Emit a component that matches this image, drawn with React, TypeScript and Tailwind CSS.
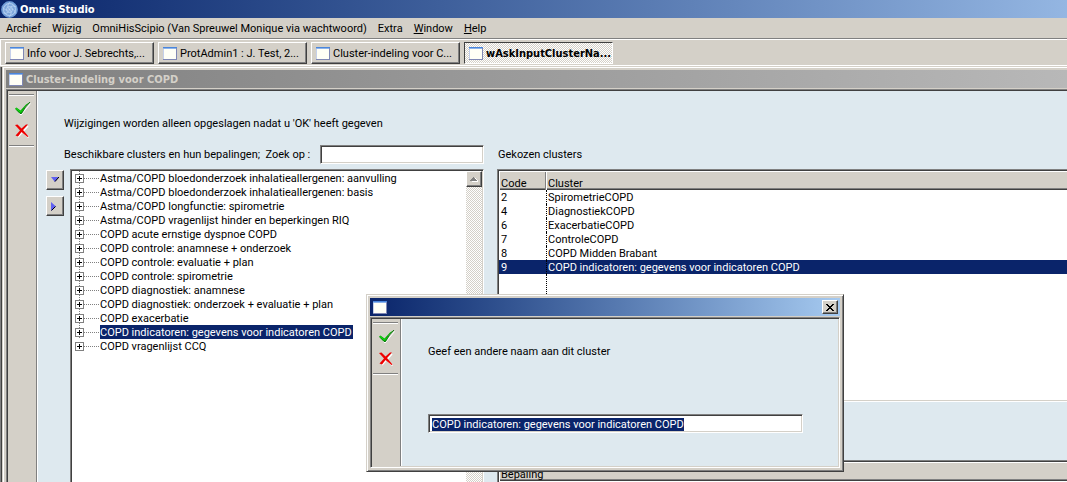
import { useEffect, useRef } from 'react';

const clusters = [
  'Astma/COPD bloedonderzoek inhalatieallergenen: aanvulling',
  'Astma/COPD bloedonderzoek inhalatieallergenen: basis',
  'Astma/COPD longfunctie: spirometrie',
  'Astma/COPD vragenlijst hinder en beperkingen RIQ',
  'COPD acute ernstige dyspnoe COPD',
  'COPD controle: anamnese + onderzoek',
  'COPD controle: evaluatie + plan',
  'COPD controle: spirometrie',
  'COPD diagnostiek: anamnese',
  'COPD diagnostiek: onderzoek + evaluatie + plan',
  'COPD exacerbatie',
  'COPD indicatoren: gegevens voor indicatoren COPD',
  'COPD vragenlijst CCQ',
];
const selectedCluster = 11;

const chosen = [
  { code: 2, name: 'SpirometrieCOPD' },
  { code: 4, name: 'DiagnostiekCOPD' },
  { code: 6, name: 'ExacerbatieCOPD' },
  { code: 7, name: 'ControleCOPD' },
  { code: 8, name: 'COPD Midden Brabant' },
  { code: 9, name: 'COPD indicatoren: gegevens voor indicatoren COPD' },
];

const tabs = ['Info voor J. Sebrechts,...', 'ProtAdmin1 : J. Test, 2...', 'Cluster-indeling voor C...', 'wAskInputClusterNa...'];

const raised =
  'border border-t-white border-l-white border-r-[#404040] border-b-[#404040] shadow-[inset_-1px_-1px_0_#808080] bg-[#d4d0c8]';
const sunken =
  'border border-t-[#808080] border-l-[#808080] border-r-white border-b-white shadow-[inset_1px_1px_0_#404040,inset_-1px_-1px_0_#d4d0c8] bg-white';
const checker = 'bg-[repeating-conic-gradient(#d4d0c8_0_25%,#ffffff_0_50%)] bg-[length:2px_2px]';
const boldFont = "font-['DejaVu_Sans_Condensed','DejaVu_Sans',sans-serif] font-bold";

function Logo() {
  return (
    <svg width="17" height="17" viewBox="0 0 17 17" className="shrink-0" aria-hidden="true">
      <circle cx="8.5" cy="8.5" r="8.2" fill="#7ea6dc" />
      <g fill="none" stroke="#c3daf5" strokeWidth="0.7">
        <path d="M8.5 8.5C9 5 12 4 15.5 6M8.5 8.5C11.500 7 14 9 14.500 13M8.500 8.500C11 10.500 10.500 13.500 8 16M8.500 8.500C8 11.500 5.500 13 2 12M8.500 8.500C5.500 10 3 8.500 1 5.500M8.500 8.500C6 6.500 6.500 3.500 9 1" />
        <circle cx="8.5" cy="8.5" r="3" />
        <circle cx="8.5" cy="8.5" r="6" />
      </g>
      <circle cx="8.5" cy="8.5" r="7.8" fill="none" stroke="#5b8acb" strokeWidth="0.8" />
    </svg>
  );
}

function WindowIcon() {
  return (
    <svg width="14" height="13" viewBox="0 0 14 13" shapeRendering="crispEdges" className="shrink-0" aria-hidden="true">
      <rect width="14" height="13" fill="#c5d0ea" />
      <rect x="1" y="1" width="12" height="11" fill="#fffff6" />
      <rect width="14" height="1" fill="#4a86dc" />
      <rect y="1" width="14" height="1" fill="#8db3ea" />
      <rect x="13" y="1" width="1" height="12" fill="#8088b4" />
      <rect y="12" width="14" height="1" fill="#8088b4" />
    </svg>
  );
}

function CheckIcon() {
  return (
    <svg width="16" height="14" viewBox="0 0 16 14" aria-hidden="true">
      <path d="M1 8 6 13 15.500 1.500" fill="none" stroke="#fff" strokeWidth="1" />
      <path d="M0 6.500 1.500 5.500 5.500 8.500 11 2.500 15 0 10 5 6.500 11.500 5 11.500Z" fill="#00b400" />
      <path d="M15 0 10.500 5 6.500 11.500 5 11.500 1 7.500" fill="none" stroke="#006c00" strokeWidth="0.9" />
      <path d="M1 6.500 5.500 10 7.500 8" fill="none" stroke="#16dc16" strokeWidth="1" />
    </svg>
  );
}

function CrossIcon() {
  return (
    <svg width="15" height="14" viewBox="0 0 15 14" aria-hidden="true">
      <path d="M2 2 13.500 13.500M13 2 3 13" fill="none" stroke="#fff" strokeWidth="1.500" />
      <path d="M0 1 2.500 0.500 6.500 4.500 11 0.500 13 0.500 8 6 13.500 12.500 12.500 13 6.500 8 3 12.500 0.500 11.500 5 6.500Z" fill="#ee0000" />
    </svg>
  );
}

function Groove() {
  return <div className="mx-px h-[2px] w-[25px] border-t border-b border-t-[#808080] border-b-white" />;
}

function SideBar() {
  return (
    <div className="flex w-[30px] shrink-0 flex-col border-r border-r-white bg-[#d4d0c8] pt-[3px] shadow-[inset_-1px_0_0_#808080]">
      <Groove />
      <div className="flex flex-col gap-2 pt-[6px] pb-[7px] pl-[7px]">
        <button type="button" aria-label="OK" className="h-[14px] w-4">
          <CheckIcon />
        </button>
        <button type="button" aria-label="Annuleren" className="h-[14px] w-4">
          <CrossIcon />
        </button>
      </div>
      <Groove />
    </div>
  );
}

function ClusterTree() {
  return (
    <div className={`-mb-1 flex min-h-0 flex-1 overflow-hidden p-px ${sunken}`}>
      <ul className="min-w-0 flex-1 pl-[3px]">
        {clusters.map((name, i) => (
          <li key={name} className="flex h-[14px] items-center">
            <div
              className={`flex h-[14px] w-[9px] items-center ${
                i === clusters.length - 1
                  ? ''
                  : 'bg-[repeating-linear-gradient(#808080_0_1px,#fff_1px_2px)] bg-[length:1px_100%] bg-[position:4px_0] bg-no-repeat'
              }`}
            >
              <button type="button" aria-label={`Uitklappen ${name}`} className="h-[9px] w-[9px]">
                <svg width="9" height="9" shapeRendering="crispEdges" aria-hidden="true">
                  <path d="M0.500 0.500H8.500V8.500H0.500Z" fill="#fff" stroke="#808080" />
                  <path d="M2 4.500H7M4.500 2V7" stroke="#000" />
                </svg>
              </button>
            </div>
            <span className="h-px w-4 bg-[repeating-linear-gradient(90deg,#808080_0_1px,#fff_1px_2px)]" />
            <span
              className={`h-[14px] pt-px pr-px leading-[13px] whitespace-nowrap ${
                i === selectedCluster ? 'bg-[#0a246a] text-white' : ''
              }`}
            >
              {name}
            </span>
          </li>
        ))}
      </ul>
      <div className={`w-4 shrink-0 ${checker}`}>
        <button type="button" aria-label="Omhoog" className={`flex h-4 w-4 items-center justify-center ${raised}`}>
          <svg width="8" height="5" shapeRendering="crispEdges" aria-hidden="true">
            <path d="M1 5H8V4L5 1Z" fill="#fff" />
            <path d="M0 4 3.500 0 7 4Z" fill="#808080" />
          </svg>
        </button>
      </div>
    </div>
  );
}

const headCell =
  'h-[19px] border-t border-l border-t-white border-l-white bg-[#d4d0c8] pl-px pt-[5px] text-left align-middle font-normal leading-[13px] shadow-[inset_-1px_0_0_#808080,inset_0_-1px_0_#404040,inset_0_-2px_0_#808080]';

function ChosenTable() {
  return (
    <div className={`h-[233px] overflow-hidden p-px ${sunken}`}>
      <table className="h-full w-full table-fixed border-separate border-spacing-0">
        <thead>
          <tr>
            <th className={`w-[47px] ${headCell}`}>Code</th>
            <th className={headCell}>Cluster</th>
          </tr>
        </thead>
        <tbody>
          {chosen.map((row) => (
            <tr key={row.code} className={row.code === 9 ? 'bg-[#0a246a] text-white' : ''}>
              <td className="h-[14px] pt-px pl-[2px] leading-[13px]">{row.code}</td>
              <td className="h-[14px] border-l border-dotted border-black pt-px pl-px leading-[13px] whitespace-nowrap">{row.name}</td>
            </tr>
          ))}
          <tr>
            <td />
            <td className="border-l border-dotted border-black" />
          </tr>
        </tbody>
      </table>
    </div>
  );
}

function RenameDialog() {
  const input = useRef<HTMLInputElement>(null);
  useEffect(() => {
    input.current?.focus();
    input.current?.select();
  }, []);
  return (
    <div
      role="dialog"
      aria-label="Naam van cluster"
      className="absolute top-[294px] left-[366px] w-[478px] border border-t-[#d4d0c8] border-l-[#d4d0c8] border-r-[#404040] border-b-[#404040] bg-[#d4d0c8] p-[3px] shadow-[inset_1px_1px_0_#fff,inset_-1px_-1px_0_#808080]"
    >
      <div className="flex h-[18px] items-center justify-between bg-linear-to-r from-[#0a246a] to-[#a6caf0] pr-[2px] pl-[3px]">
        <WindowIcon />
        <button type="button" aria-label="Sluiten" className={`flex h-[14px] w-4 items-center justify-center ${raised}`}>
          <svg width="8" height="7" shapeRendering="crispEdges" aria-hidden="true">
            <path d="M0 0h2v1h1v1h2v-1h1v-1h2v1h-1v1h-1v1h-1v1h1v1h1v1h1v1h-2v-1h-1v-1h-2v1h-1v1h-2v-1h1v-1h1v-1h1v-1h-1v-1h-1v-1h-1z" />
          </svg>
        </button>
      </div>
      <div className="mt-px flex border border-t-[#808080] border-l-[#808080] border-r-white border-b-white bg-[#d4d0c8] p-px shadow-[inset_1px_1px_0_#404040,inset_-1px_-1px_0_#d4d0c8]">
        <SideBar />
        <div className="flex-1 bg-[#dee9ef] pt-[26px] pr-[35px] pb-[33px] pl-[26px]">
          <label htmlFor="cluster-name" className="block leading-[14px]">
            Geef een andere naam aan dit cluster
          </label>
          <input
            id="cluster-name"
            ref={input}
            defaultValue="COPD indicatoren: gegevens voor indicatoren COPD"
            className={`mt-[55px] block h-[19px] w-full px-[3px] pt-[2px] leading-[13px] outline-none selection:bg-[#0a246a] selection:text-white ${sunken}`}
          />
        </div>
      </div>
    </div>
  );
}

export default function App() {
  return (
    <div className="relative flex h-screen flex-col overflow-hidden bg-[#d4d0c8] font-['Roboto',sans-serif] text-[11px] text-black">
      <header className={`flex h-[18px] shrink-0 items-center gap-[2px] bg-linear-to-r from-[#0a246a] to-[#94b6e2] pl-px text-white ${boldFont}`}>
        <Logo />
        <h1 className="pt-[2px]">Omnis Studio</h1>
      </header>
      <nav className="flex h-[21px] shrink-0 items-center gap-[11px] border-b border-b-[#808080] pt-[2px] pl-[6px] whitespace-nowrap">
        <button type="button">Archief</button>
        <button type="button">Wijzig</button>
        <button type="button">OmniHisScipio (Van Spreuwel Monique via wachtwoord)</button>
        <button type="button">Extra</button>
        <button type="button">
          <span className="underline">W</span>indow
        </button>
        <button type="button">
          <span className="underline">H</span>elp
        </button>
      </nav>
      <div className="flex h-[27px] shrink-0 gap-1 border-t border-b border-l border-white pt-[2px] pl-1">
        {tabs.map((tab, i) => (
          <button
            key={tab}
            type="button"
            className={`flex h-[22px] w-[149px] items-center gap-[3px] overflow-hidden pl-1 whitespace-nowrap ${
              i === 3
                ? `border border-t-[#404040] border-l-[#404040] border-r-white border-b-white pt-px ${boldFont} ${checker}`
                : raised
            }`}
          >
            <WindowIcon />
            <span className="pt-[2px]">{tab}</span>
          </button>
        ))}
      </div>
      <div className="mt-px flex min-h-0 flex-1 border-l border-[#808080] shadow-[inset_1px_0_0_#404040]">
        <section className="ml-[2px] flex min-h-0 min-w-0 flex-1 flex-col border-t border-l border-white pt-[2px] pl-[2px]">
          <div className={`flex h-[18px] shrink-0 items-center gap-[3px] bg-linear-to-r from-[#808080] to-[#b8b8b8] pl-[3px] text-[#d4d0c8] ${boldFont}`}>
            <WindowIcon />
            <h2 className="pt-[2px]">Cluster-indeling voor COPD</h2>
          </div>
          <div className="mt-px flex min-h-0 flex-1 border-t border-l border-[#808080]">
            <div className="flex min-h-0 min-w-0 flex-1 border-t border-l border-[#404040]">
              <SideBar />
              <main className="flex min-h-0 min-w-0 flex-1 flex-col bg-[#dee9ef]">
                <p className="pt-[26px] pl-[26px] leading-[14px]">Wijzigingen worden alleen opgeslagen nadat u 'OK' heeft gegeven</p>
                <div className="mt-[14px] flex min-h-0 flex-1 gap-[13px] pl-2">
                  <div className="flex w-[438px] shrink-0 flex-col">
                    <div className="flex h-6 shrink-0 items-start justify-between pl-[18px]">
                      <label htmlFor="search" className="pt-[3px] leading-[14px] whitespace-pre">
                        Beschikbare clusters en hun bepalingen;  Zoek op :
                      </label>
                      <input id="search" className={`h-[19px] w-[164px] px-1 outline-none ${sunken}`} />
                    </div>
                    <div className="flex min-h-0 flex-1 gap-[6px]">
                      <div className="flex w-[18px] shrink-0 flex-col gap-[6px] pt-px">
                        <button type="button" aria-label="Omlaag" className={`flex h-5 w-[18px] items-center justify-center pb-[2px] ${raised}`}>
                          <svg width="8" height="5" aria-hidden="true">
                            <path d="M0 0H8L4 5Z" fill="#6060f0" />
                            <path d="M8 0 4 4.500" stroke="#000" />
                          </svg>
                        </button>
                        <button type="button" aria-label="Toevoegen" className={`flex h-5 w-[18px] items-center justify-center pr-1 ${raised}`}>
                          <svg width="5" height="9" aria-hidden="true">
                            <path d="M0 0V9L5 4.500Z" fill="#6060f0" />
                            <path d="M0.500 8.500 4.500 4.500" stroke="#000" />
                          </svg>
                        </button>
                      </div>
                      <ClusterTree />
                    </div>
                  </div>
                  <div className="-mr-1 flex min-w-0 flex-1 flex-col">
                    <h3 className="h-6 shrink-0 pt-[3px] pl-px leading-[14px]">Gekozen clusters</h3>
                    <div className="shrink-0">
                      <ChosenTable />
                    </div>
                    <div className={`mt-[58px] h-24 shrink-0 overflow-hidden p-px ${sunken}`}>
                      <table className="w-full border-separate border-spacing-0">
                        <thead>
                          <tr>
                            <th className={headCell}>Bepaling</th>
                          </tr>
                        </thead>
                      </table>
                    </div>
                  </div>
                </div>
              </main>
            </div>
          </div>
        </section>
      </div>
      <RenameDialog />
    </div>
  );
}
